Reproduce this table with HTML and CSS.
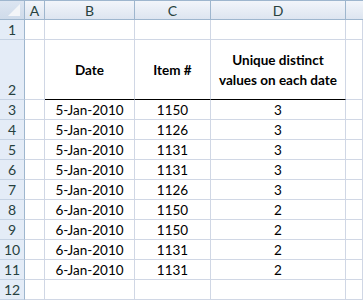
FILE: index.html
```html
<!DOCTYPE html>
<html lang="en">
<head>
  <meta charset="UTF-8">
  <title>Unique distinct values</title>
  <link rel="stylesheet" href="styles.css">
</head>
<body>

  <div class="sheet">
    <!-- column headers -->
    <div class="corner">
      <svg width="24" height="19" viewBox="0 0 24 19"><polygon points="20,4 20,16 8,16" fill="#f3f5f8"/></svg>
    </div>
    <div class="colhead">A</div>
    <div class="colhead">B</div>
    <div class="colhead">C</div>
    <div class="colhead">D</div>
    <div class="colhead last"></div>

    <!-- row 1 -->
    <div class="rowhead">1</div>
    <div class="cell"></div><div class="cell"></div><div class="cell"></div><div class="cell"></div><div class="cell"></div>

    <!-- row 2 -->
    <div class="rowhead tall">2</div>
    <div class="cell"></div>
    <div class="cell title">Date</div>
    <div class="cell title">Item #</div>
    <div class="cell title">Unique distinct<br>values on each date</div>
    <div class="cell"></div>

    <div class="rowhead">3</div>
    <div class="cell"></div><div class="cell">5-Jan-2010</div><div class="cell">1150</div><div class="cell">3</div><div class="cell"></div>
    <div class="rowhead">4</div>
    <div class="cell"></div><div class="cell">5-Jan-2010</div><div class="cell">1126</div><div class="cell">3</div><div class="cell"></div>
    <div class="rowhead">5</div>
    <div class="cell"></div><div class="cell">5-Jan-2010</div><div class="cell">1131</div><div class="cell">3</div><div class="cell"></div>
    <div class="rowhead">6</div>
    <div class="cell"></div><div class="cell">5-Jan-2010</div><div class="cell">1131</div><div class="cell">3</div><div class="cell"></div>
    <div class="rowhead">7</div>
    <div class="cell"></div><div class="cell">5-Jan-2010</div><div class="cell">1126</div><div class="cell">3</div><div class="cell"></div>
    <div class="rowhead">8</div>
    <div class="cell"></div><div class="cell">6-Jan-2010</div><div class="cell">1150</div><div class="cell">2</div><div class="cell"></div>
    <div class="rowhead">9</div>
    <div class="cell"></div><div class="cell">6-Jan-2010</div><div class="cell">1150</div><div class="cell">2</div><div class="cell"></div>
    <div class="rowhead">10</div>
    <div class="cell"></div><div class="cell">6-Jan-2010</div><div class="cell">1131</div><div class="cell">2</div><div class="cell"></div>
    <div class="rowhead">11</div>
    <div class="cell"></div><div class="cell">6-Jan-2010</div><div class="cell">1131</div><div class="cell">2</div><div class="cell"></div>
    <div class="rowhead">12</div>
    <div class="cell"></div><div class="cell"></div><div class="cell"></div><div class="cell"></div><div class="cell"></div>
  </div>

</body>
</html>
```

FILE: styles.css
```css
body {
  margin: 0;
  background: #fff;
  font-family: Lato, 'Liberation Sans', sans-serif;
  font-size: 13.5px;
  color: #000;
  overflow: hidden;
}

.sheet {
  display: grid;
  grid-template-columns: 25px 20px 90px 76px 135px 17px;
  grid-template-rows: 20px 20px 60px repeat(10, 20px);
}

.sheet > div {
  box-sizing: border-box;
  display: flex;
  align-items: center;
  justify-content: center;
  white-space: nowrap;
}

.corner {
  background: linear-gradient(#dde6f2, #cfdbea);
  border-right: 1px solid #9eb6ce;
  border-bottom: 1px solid #9eb6ce;
  box-shadow: inset 0 1px #9eb6ce;
}

.colhead {
  background: linear-gradient(#f3f6fb, #dde5f0);
  border-right: 1px solid #9eb6ce;
  border-bottom: 1px solid #9eb6ce;
  box-shadow: inset 0 1px #9eb6ce;
  color: #27413e;
  font-size: 14px;
  padding-top: 1px;
}

.colhead.last {
  border-right: none;
}

.rowhead {
  background: #e4ecf7;
  border-right: 1px solid #9eb6ce;
  border-bottom: 1px solid #c5d2e3;
  color: #27413e;
  font-size: 14px;
}

.rowhead.tall {
  align-items: flex-end !important;
  padding-bottom: 1px;
}

.cell {
  border-right: 1px solid #d0d7e5;
  border-bottom: 1px solid #d0d7e5;
}

.title {
  font-weight: 700;
  text-align: center;
  line-height: 20px;
  border-bottom: 1px solid #000 !important;
}
```
